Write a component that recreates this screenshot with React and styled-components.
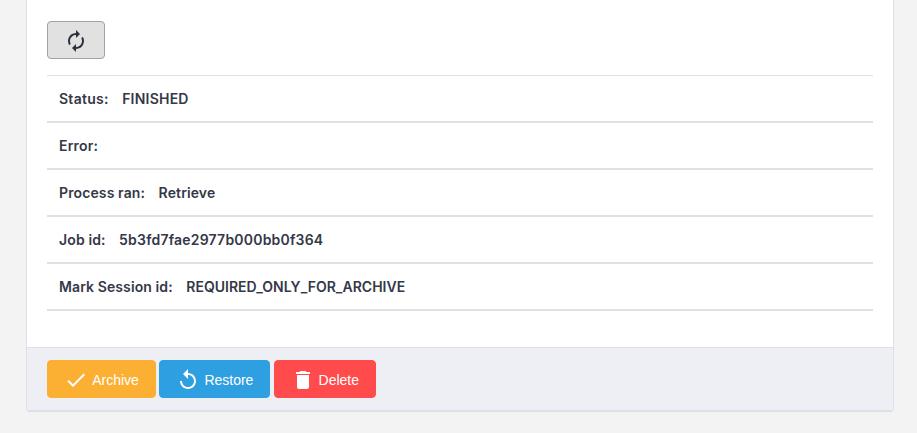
import React from "react";
import styled, { createGlobalStyle } from "styled-components";
import { MdAutorenew, MdDone, MdReplay, MdDelete } from "react-icons/md";

const GlobalStyle = createGlobalStyle`
  * { box-sizing: border-box; }
  html, body { margin: 0; background: #f3f3f3; }
  body { font-family: Inter, "Liberation Sans", sans-serif; color: #343847; overflow: hidden; }
`;

const Page = styled.main`
  height: 433px;
  padding: 0 23px 21px 26px;
`;

const Card = styled.section`
  height: 412px;
  display: flex;
  flex-direction: column;
  overflow: hidden;
  background: #fff;
  border: 1px solid #dfe0e7;
  border-width: 0 1px 2px;
  border-radius: 0 0 4px 4px;
`;

const CardBody = styled.div`
  flex: 1;
  padding: 21px 20px 0;
`;

const Button = styled.button`
  display: inline-flex;
  align-items: center;
  justify-content: center;
  gap: 4px;
  width: ${(p) => p.$width}px;
  height: 38px;
  padding: 2px 0 0;
  border: 1px solid ${(p) => p.$border || p.$color};
  border-radius: 4px;
  background: ${(p) => p.$color};
  color: ${(p) => p.$text || "#fff"};
  font: 14px "Liberation Sans", Arial, sans-serif;
  letter-spacing: -0.02px;
  svg { width: 24px; height: 24px; flex: none; }
`;

const DetailList = styled.div`
  margin-top: 16px;
  border-top: 1px solid #dfe0e4;
`;

const DetailRow = styled.div`
  display: flex;
  align-items: center;
  height: 47px;
  padding: 0 12px;
  border-bottom: 2px solid #e0e0e6;
  font-size: 14px;
  font-weight: 600;
  white-space: nowrap;
`;

const DetailLabel = styled.span`
  margin-right: 13.5px;
  letter-spacing: ${(p) => p.$tracking}px;
`;

const DetailValue = styled.span`
  letter-spacing: ${(p) => p.$tracking}px;
`;

const Footer = styled.footer`
  display: flex;
  height: 63px;
  padding: 12px 20px 0;
  background: #eeeff5;
  border-top: 1px solid #dfe0e7;
`;

const Actions = styled.div`
  display: flex;
  gap: 3.4px;
`;

const details = [
  { label: "Status:", value: "FINISHED", labelTracking: 0.26, valueTracking: 0.22 },
  { label: "Error:", value: "", labelTracking: 0.22, valueTracking: 0 },
  { label: "Process ran:", value: "Retrieve", labelTracking: 0.12, valueTracking: 0.12 },
  { label: "Job id:", value: "5b3fd7fae2977b000bb0f364", labelTracking: 0.12, valueTracking: 0.2 },
  { label: "Mark Session id:", value: "REQUIRED_ONLY_FOR_ARCHIVE", labelTracking: 0.1, valueTracking: 0.02 },
];

export default function App() {
  return (
    <Page>
      <GlobalStyle />
      <Card>
        <CardBody>
          <Button $width={58} $color="#e1e1e1" $border="#a3a3a3" $text="#2c303b" aria-label="Refresh">
            <MdAutorenew />
          </Button>
          <DetailList>
            {details.map((item) => (
              <DetailRow key={item.label}>
                <DetailLabel $tracking={item.labelTracking}>{item.label}</DetailLabel>
                <DetailValue $tracking={item.valueTracking}>{item.value}</DetailValue>
              </DetailRow>
            ))}
          </DetailList>
        </CardBody>
        <Footer>
          <Actions>
            <Button $width={109} $color="#fbb034"><MdDone />Archive</Button>
            <Button $width={111} $color="#2e9fe0"><MdReplay />Restore</Button>
            <Button $width={102} $color="#ff4b4b"><MdDelete />Delete</Button>
          </Actions>
        </Footer>
      </Card>
    </Page>
  );
}
